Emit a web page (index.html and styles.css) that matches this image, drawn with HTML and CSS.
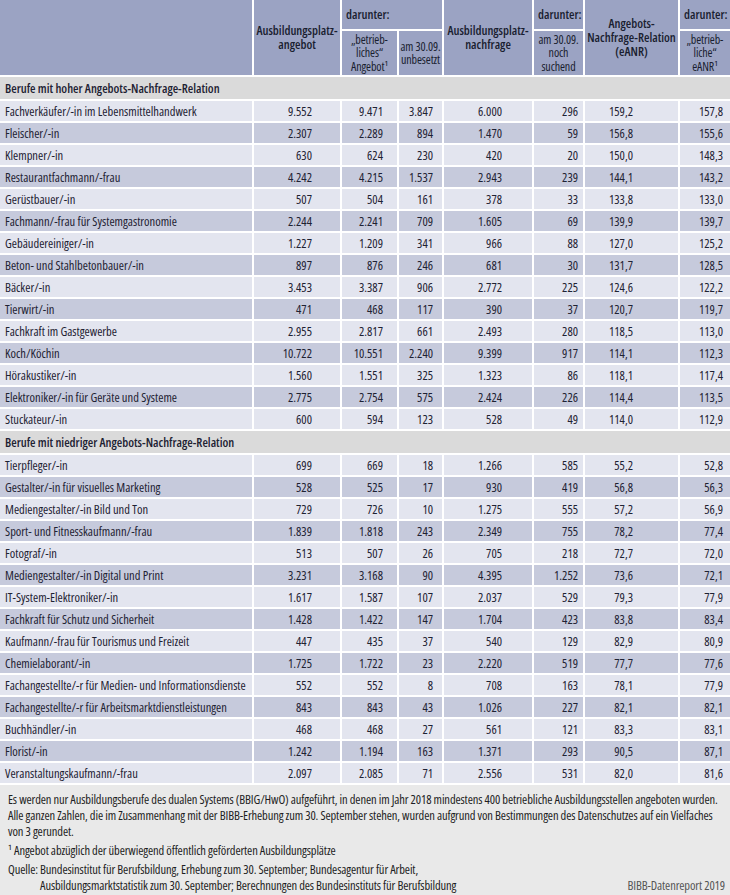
FILE: index.html
```html
<!DOCTYPE html>
<html lang="de">
<head>
<meta charset="utf-8">
<title>BIBB-Datenreport 2019</title>
<link rel="stylesheet" href="styles.css">
</head>
<body>
<table class="data">
  <colgroup>
    <col class="c-label"><col class="c-angebot"><col class="c-betr"><col class="c-unbes"><col class="c-nachfr"><col class="c-such"><col class="c-eanr"><col class="c-beanr">
  </colgroup>
  <thead>
    <tr class="head-top">
      <th class="h-empty" rowspan="2"></th>
      <th class="h-main" rowspan="2">Ausbildungsplatz-<br>angebot</th>
      <th class="h-dar" colspan="2">darunter:</th>
      <th class="h-main" rowspan="2">Ausbildungsplatz-<br>nachfrage</th>
      <th class="h-dar">darunter:</th>
      <th class="h-main" rowspan="2">Angebots-<br>Nachfrage-Relation<br>(eANR)</th>
      <th class="h-dar">darunter:</th>
    </tr>
    <tr class="head-sub">
      <th class="h-sub">„betrieb-<br>liches“<br>Angebot¹</th>
      <th class="h-sub">am 30.09.<br>unbesetzt</th>
      <th class="h-sub">am 30.09.<br>noch<br>suchend</th>
      <th class="h-sub">„betrieb-<br>liche“<br>eANR¹</th>
    </tr>
  </thead>
  <tbody class="section">
    <tr><td colspan="8">Berufe mit hoher Angebots-Nachfrage-Relation</td></tr>
  </tbody>
  <tbody class="rows">
    <tr><td>Fachverkäufer/-in im Lebensmittelhandwerk</td><td>9.552</td><td>9.471</td><td>3.847</td><td>6.000</td><td>296</td><td>159,2</td><td>157,8</td></tr>
    <tr><td>Fleischer/-in</td><td>2.307</td><td>2.289</td><td>894</td><td>1.470</td><td>59</td><td>156,8</td><td>155,6</td></tr>
    <tr><td>Klempner/-in</td><td>630</td><td>624</td><td>230</td><td>420</td><td>20</td><td>150,0</td><td>148,3</td></tr>
    <tr><td>Restaurantfachmann/-frau</td><td>4.242</td><td>4.215</td><td>1.537</td><td>2.943</td><td>239</td><td>144,1</td><td>143,2</td></tr>
    <tr><td>Gerüstbauer/-in</td><td>507</td><td>504</td><td>161</td><td>378</td><td>33</td><td>133,8</td><td>133,0</td></tr>
    <tr><td>Fachmann/-frau für Systemgastronomie</td><td>2.244</td><td>2.241</td><td>709</td><td>1.605</td><td>69</td><td>139,9</td><td>139,7</td></tr>
    <tr><td>Gebäudereiniger/-in</td><td>1.227</td><td>1.209</td><td>341</td><td>966</td><td>88</td><td>127,0</td><td>125,2</td></tr>
    <tr><td>Beton- und Stahlbetonbauer/-in</td><td>897</td><td>876</td><td>246</td><td>681</td><td>30</td><td>131,7</td><td>128,5</td></tr>
    <tr><td>Bäcker/-in</td><td>3.453</td><td>3.387</td><td>906</td><td>2.772</td><td>225</td><td>124,6</td><td>122,2</td></tr>
    <tr><td>Tierwirt/-in</td><td>471</td><td>468</td><td>117</td><td>390</td><td>37</td><td>120,7</td><td>119,7</td></tr>
    <tr><td>Fachkraft im Gastgewerbe</td><td>2.955</td><td>2.817</td><td>661</td><td>2.493</td><td>280</td><td>118,5</td><td>113,0</td></tr>
    <tr><td>Koch/Köchin</td><td>10.722</td><td>10.551</td><td>2.240</td><td>9.399</td><td>917</td><td>114,1</td><td>112,3</td></tr>
    <tr><td>Hörakustiker/-in</td><td>1.560</td><td>1.551</td><td>325</td><td>1.323</td><td>86</td><td>118,1</td><td>117,4</td></tr>
    <tr><td>Elektroniker/-in für Geräte und Systeme</td><td>2.775</td><td>2.754</td><td>575</td><td>2.424</td><td>226</td><td>114,4</td><td>113,5</td></tr>
    <tr><td>Stuckateur/-in</td><td>600</td><td>594</td><td>123</td><td>528</td><td>49</td><td>114,0</td><td>112,9</td></tr>
  </tbody>
  <tbody class="section">
    <tr><td colspan="8">Berufe mit niedriger Angebots-Nachfrage-Relation</td></tr>
  </tbody>
  <tbody class="rows">
    <tr><td>Tierpfleger/-in</td><td>699</td><td>669</td><td>18</td><td>1.266</td><td>585</td><td>55,2</td><td>52,8</td></tr>
    <tr><td>Gestalter/-in für visuelles Marketing</td><td>528</td><td>525</td><td>17</td><td>930</td><td>419</td><td>56,8</td><td>56,3</td></tr>
    <tr><td>Mediengestalter/-in Bild und Ton</td><td>729</td><td>726</td><td>10</td><td>1.275</td><td>555</td><td>57,2</td><td>56,9</td></tr>
    <tr><td>Sport- und Fitnesskaufmann/-frau</td><td>1.839</td><td>1.818</td><td>243</td><td>2.349</td><td>755</td><td>78,2</td><td>77,4</td></tr>
    <tr><td>Fotograf/-in</td><td>513</td><td>507</td><td>26</td><td>705</td><td>218</td><td>72,7</td><td>72,0</td></tr>
    <tr><td>Mediengestalter/-in Digital und Print</td><td>3.231</td><td>3.168</td><td>90</td><td>4.395</td><td>1.252</td><td>73,6</td><td>72,1</td></tr>
    <tr><td>IT-System-Elektroniker/-in</td><td>1.617</td><td>1.587</td><td>107</td><td>2.037</td><td>529</td><td>79,3</td><td>77,9</td></tr>
    <tr><td>Fachkraft für Schutz und Sicherheit</td><td>1.428</td><td>1.422</td><td>147</td><td>1.704</td><td>423</td><td>83,8</td><td>83,4</td></tr>
    <tr><td>Kaufmann/-frau für Tourismus und Freizeit</td><td>447</td><td>435</td><td>37</td><td>540</td><td>129</td><td>82,9</td><td>80,9</td></tr>
    <tr><td>Chemielaborant/-in</td><td>1.725</td><td>1.722</td><td>23</td><td>2.220</td><td>519</td><td>77,7</td><td>77,6</td></tr>
    <tr><td>Fachangestellte/-r für Medien- und Informationsdienste</td><td>552</td><td>552</td><td>8</td><td>708</td><td>163</td><td>78,1</td><td>77,9</td></tr>
    <tr><td>Fachangestellte/-r für Arbeitsmarktdienstleistungen</td><td>843</td><td>843</td><td>43</td><td>1.026</td><td>227</td><td>82,1</td><td>82,1</td></tr>
    <tr><td>Buchhändler/-in</td><td>468</td><td>468</td><td>27</td><td>561</td><td>121</td><td>83,3</td><td>83,1</td></tr>
    <tr><td>Florist/-in</td><td>1.242</td><td>1.194</td><td>163</td><td>1.371</td><td>293</td><td>90,5</td><td>87,1</td></tr>
    <tr><td>Veranstaltungskaufmann/-frau</td><td>2.097</td><td>2.085</td><td>71</td><td>2.556</td><td>531</td><td>82,0</td><td>81,6</td></tr>
  </tbody>
</table>
<div class="notes">
  <p class="note">Es werden nur Ausbildungsberufe des dualen Systems (BBIG/HwO) aufgeführt, in denen im Jahr 2018 mindestens 400 betriebliche Ausbildungsstellen angeboten wurden.<br>Alle ganzen Zahlen, die im Zusammenhang mit der BIBB-Erhebung zum 30. September stehen, wurden aufgrund von Bestimmungen des Datenschutzes auf ein Vielfaches von 3 gerundet.</p>
  <p class="note">¹ Angebot abzüglich der überwiegend öffentlich geförderten Ausbildungsplätze</p>
  <div class="source-row">
    <p class="source">Quelle: Bundesinstitut für Berufsbildung, Erhebung zum 30. September; Bundesagentur für Arbeit,<br>Ausbildungsmarktstatistik zum 30. September; Berechnungen des Bundesinstituts für Berufsbildung</p>
    <p class="credit">BIBB-Datenreport 2019</p>
  </div>
</div>
</body>
</html>
```
FILE: styles.css
```css
html, body {
  margin: 0;
  padding: 0;
}
body {
  width: 730px;
  background: #e9e9e9;
  color: #1e2233;
  font-family: "Open Sans", "DejaVu Sans Condensed", sans-serif;
  font-stretch: 75%;
  font-size: 12.5px;
}
.data {
  width: 730px;
  table-layout: fixed;
  border-collapse: separate;
  border-spacing: 0;
}
.c-label { width: 252px; }
.c-angebot { width: 88px; }
.c-betr { width: 57px; }
.c-unbes { width: 45px; }
.c-nachfr { width: 90px; }
.c-such { width: 51px; }
.c-eanr { width: 95px; }
.c-beanr { width: 52px; }

.data th,
.data td {
  border-left: 2px solid #fff;
  border-bottom: 2px solid #fff;
  padding: 0;
  box-sizing: border-box;
}
.data th.h-empty,
.data td:first-child {
  border-left: none;
}
.data thead th {
  background: #9ba3c3;
  color: #1a1e30;
  line-height: 14px;
  vertical-align: middle;
  text-align: center;
  font-size: 12.5px;
}
.head-top { height: 31px; }
.head-sub { height: 46px; }
.h-main {
  font-weight: 650;
}
.h-dar {
  font-weight: 650;
  text-align: left !important;
  padding-left: 4px !important;
}
.data thead th.h-sub {
  font-weight: 420;
  font-size: 12px;
  line-height: 13.5px;
  white-space: nowrap;
  letter-spacing: -0.1px;
}
.data .head-sub th:first-child {
  border-left: 2px solid #fff;
}

.section td {
  background: #dadada;
  font-weight: 650;
  height: 24px;
  padding-left: 5px;
  vertical-align: middle;
}
.rows tr { height: 22px; }
.rows td {
  background: #e3e5ef;
  text-align: right;
  vertical-align: middle;
  white-space: nowrap;
  font-weight: 420;
}
.rows tr:nth-child(even) td {
  background: #c6cadc;
}
.rows td:nth-child(1) { text-align: left; padding-left: 5px; }
.rows td:nth-child(2) { padding-right: 28px; }
.rows td:nth-child(3) { padding-right: 14px; }
.rows td:nth-child(4) { padding-right: 9px; }
.rows td:nth-child(5) { padding-right: 30px; }
.rows td:nth-child(6) { padding-right: 5px; }
.rows td:nth-child(7) { padding-right: 45px; }
.rows td:nth-child(8) { padding-right: 7px; }

.notes {
  padding: 7px 2px 0 8px;
  font-size: 12.5px;
  letter-spacing: -0.12px;
  line-height: 16px;
  color: #1e1e24;
  font-weight: 420;
}
.note {
  margin: 0 0 3px 0;
}
.source-row {
  display: flex;
  justify-content: space-between;
  align-items: flex-end;
}
.source {
  margin: 0;
  padding-left: 32px;
  text-indent: -32px;
}
.credit {
  margin: 0 3px 0 0;
  color: #555;
}
```
